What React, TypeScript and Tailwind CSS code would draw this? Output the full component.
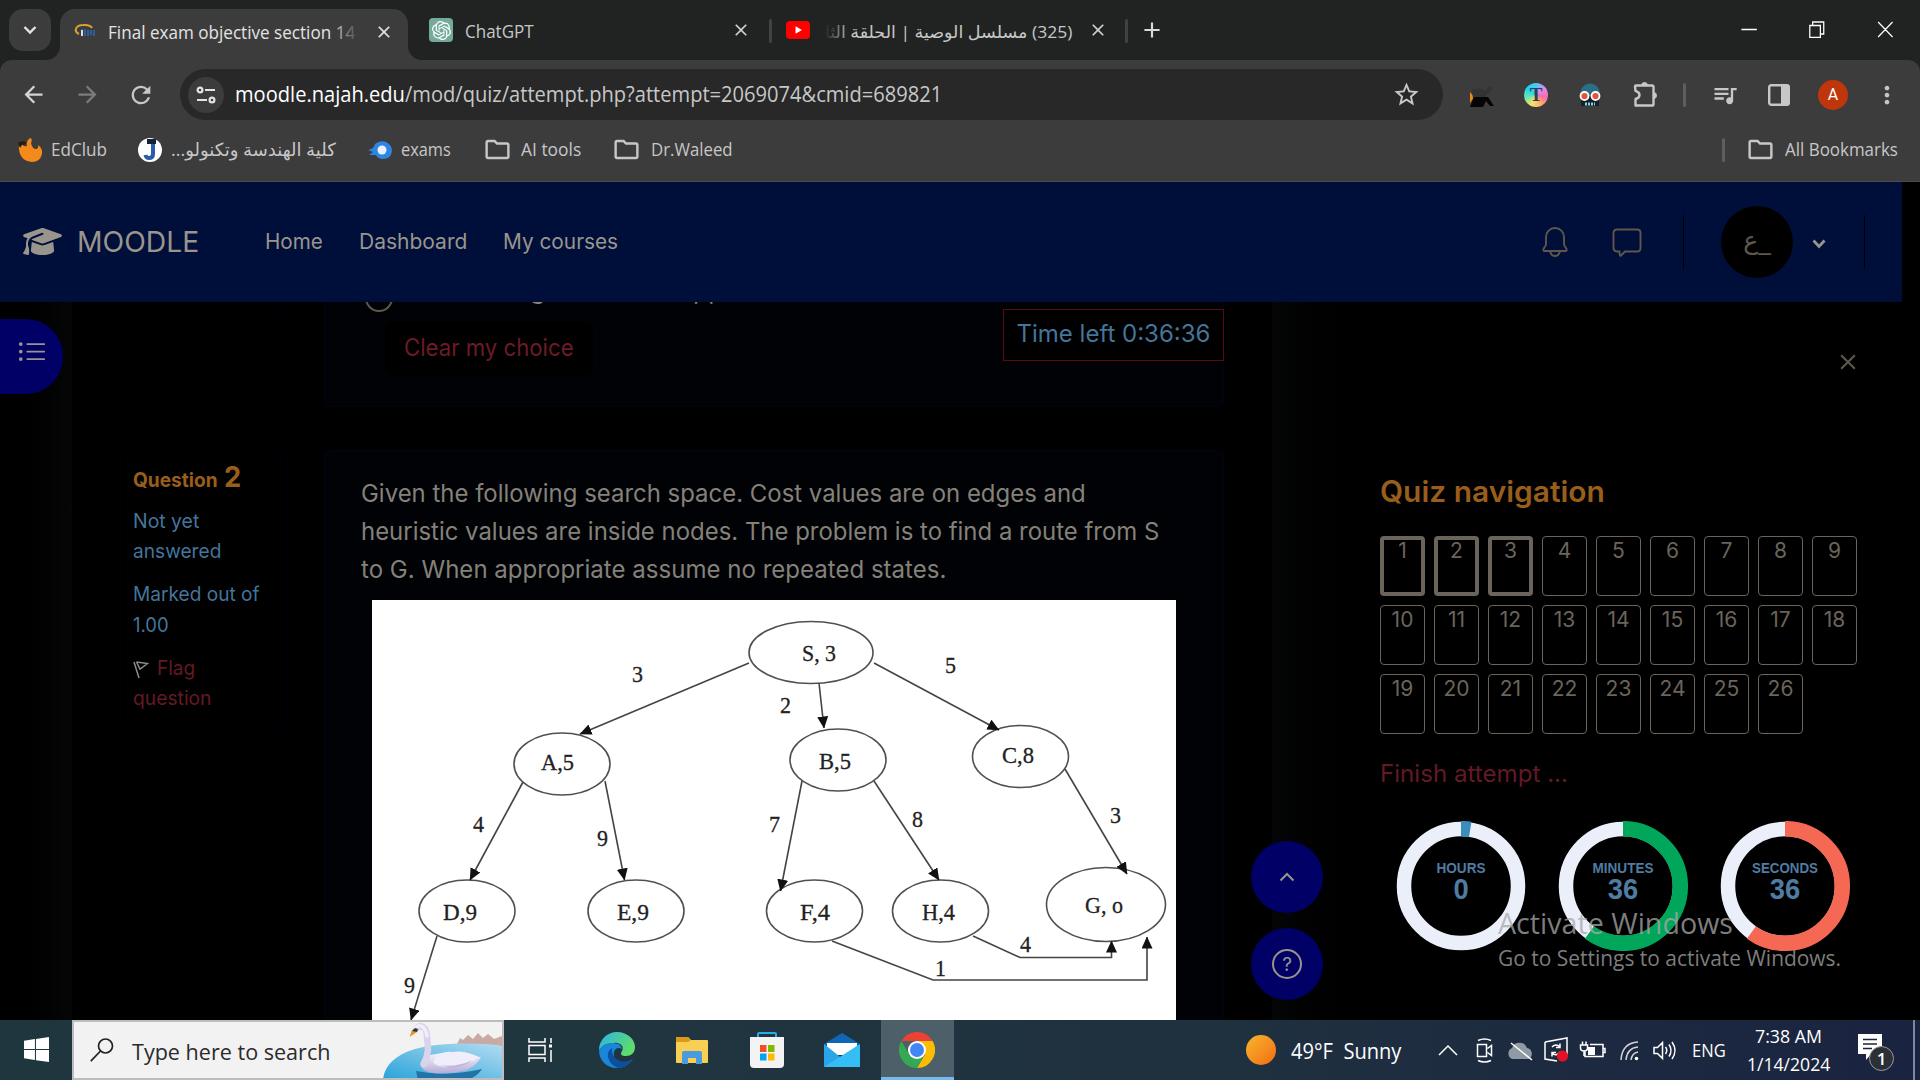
import React, { useLayoutEffect, useRef, useState } from "react";
import {
  MdAdd,
  MdArrowBack,
  MdArrowForward,
  MdClose,
  MdMoreVert,
  MdOutlineExtension,
  MdOutlineFolder,
  MdQueueMusic,
  MdRefresh,
  MdStarBorder,
} from "react-icons/md";
import { FaGraduationCap } from "react-icons/fa6";
import { SiOpenai } from "react-icons/si";
import { BsListUl } from "react-icons/bs";

const UI = "font-['Open_Sans','DejaVu_Sans',sans-serif]";

/** Single line of text condensed or stretched to a fixed width. */
function Fit({
  w,
  className = "",
  children,
  rtl = false,
}: {
  w: number;
  className?: string;
  children: React.ReactNode;
  rtl?: boolean;
}) {
  const ref = useRef<HTMLSpanElement>(null);
  const [scale, setScale] = useState(1);
  useLayoutEffect(() => {
    if (ref.current) setScale(w / ref.current.offsetWidth);
  }, [w]);
  return (
    <span className={`block shrink-0 whitespace-nowrap ${className}`} style={{ width: w }} dir="ltr">
      <span
        ref={ref}
        dir={rtl ? "rtl" : "ltr"}
        className="inline-block origin-left"
        style={{ transform: `scaleX(${scale})` }}
      >
        {children}
      </span>
    </span>
  );
}

/* ---------- Browser chrome ---------- */

function MoodleFavicon() {
  return (
    <svg viewBox="0 0 22 18" className="h-[18px] w-[22px]">
      <path d="M5 11C-1 8 2 2 9 2c5-.5 8 1 9 3" fill="none" stroke="#d9a02c" strokeWidth="2" />
      <path d="M8 12V6M11 6v7M14 7v6M17 7v5M20 7v6" stroke="#2f62a8" strokeWidth="1.8" />
      <path d="M8 7v6" stroke="#fff" strokeWidth="1.6" />
    </svg>
  );
}

function TabStrip() {
  return (
    <div className="flex h-[60px] items-start bg-[#202322]">
      <div className="mt-[9px] ml-[9px] flex h-[42px] w-[42px] items-center justify-center rounded-[14px] bg-[#3c3c3c]">
        <svg viewBox="0 0 14 10" className="h-[10px] w-[14px]">
          <path d="M1.5 2 7 7.5 12.500 2" fill="none" stroke="#e3e3e3" strokeWidth="2.4" />
        </svg>
      </div>
      <div className="relative mt-[9px] ml-[9px] flex h-[51px] w-[348px] items-center rounded-t-[15px] bg-[#3c3c3c] pb-[6px] pl-[14px]">
        <svg viewBox="0 0 14 14" className="absolute bottom-0 -left-[14px] h-[14px] w-[14px]">
          <path d="M14 0v14H0A14 14 0 0 0 14 0" fill="#3c3c3c" />
        </svg>
        <svg viewBox="0 0 14 14" className="absolute -right-[14px] bottom-0 h-[14px] w-[14px]">
          <path d="M0 0v14h14A14 14 0 0 1 0 0" fill="#3c3c3c" />
        </svg>
        <MoodleFavicon />
        <div className="relative ml-[12px] w-[252px] text-[18px] leading-[26px] text-[#e3e3e3]">
          <Fit w={247}>Final exam objective section 14</Fit>
          <div className="absolute inset-y-0 right-0 w-[30px] bg-gradient-to-r from-[#3c3c3c]/0 to-[#3c3c3c]" />
        </div>
        <MdClose className="ml-[14px] h-[20px] w-[20px] text-[#e3e3e3]" />
      </div>
      <div className="flex h-[60px] w-[361px] items-center pl-[21px]">
        <div className="flex h-[24px] w-[24px] items-center justify-center rounded-[4px] bg-[#74aa9c]">
          <SiOpenai className="h-[19px] w-[19px] text-white" />
        </div>
        <Fit w={69} className="mt-[2px] ml-[12px] text-[18px] leading-[26px] text-[#c7c7c7]">
          ChatGPT
        </Fit>
        <MdClose className="ml-[197px] h-[20px] w-[20px] text-[#d0d0d0]" />
      </div>
      <div className="mt-[19px] h-[24px] w-[3px] rounded bg-[#3f4241]" />
      <div className="flex h-[60px] w-[353px] items-center pl-[14px]">
        <svg viewBox="0 0 24 18" className="h-[18px] w-[24px]">
          <rect width="24" height="18" rx="4" fill="#f00" />
          <path d="M9.500 5.200v7.600L16 9z" fill="#fff" />
        </svg>
        <div className="relative mt-[3px] ml-[15px] w-[247px] text-[17px] leading-[28px] text-[#c7c7c7]">
          <Fit w={247} rtl>
            (325) مسلسل الوصية | الحلقة الثا
          </Fit>
          <div className="absolute inset-y-0 left-0 w-[26px] bg-gradient-to-l from-[#202322]/0 to-[#202322]" />
        </div>
        <MdClose className="ml-[16px] h-[20px] w-[20px] text-[#d0d0d0]" />
      </div>
      <div className="mt-[19px] h-[24px] w-[3px] rounded bg-[#3f4241]" />
      <MdAdd className="mt-[17px] ml-[11px] h-[26px] w-[26px] text-[#d8d8d8]" />
      <svg viewBox="0 0 160 18" className="mt-[20px] mr-[26px] ml-auto h-[18px] w-[154px]" preserveAspectRatio="none">
        <path
          d="M1.500 9.500h16M72.500 5.500h11v12h-11zM75.500 5.500v-3.500h11.500v12h-3.500M143.500 2l15 15M158.500 2l-15 15"
          fill="none"
          stroke="#fff"
          strokeWidth="1.300"
        />
      </svg>
    </div>
  );
}

function Slot({ children, className = "w-[54px]" }: { children: React.ReactNode; className?: string }) {
  return <div className={`flex shrink-0 items-center justify-center ${className}`}>{children}</div>;
}

function Toolbar() {
  return (
    <div className="bg-[#202322]">
      <div className="flex h-[69px] items-center rounded-t-[12px] bg-[#3c3c3c] px-[6px]">
        <Slot>
          <MdArrowBack className="h-[27px] w-[27px] text-[#d4d4d4]" />
        </Slot>
        <Slot>
          <MdArrowForward className="h-[27px] w-[27px] text-[#7c7c7c]" />
        </Slot>
        <Slot>
          <MdRefresh className="h-[28px] w-[28px] text-[#c7c7c7]" />
        </Slot>
        <div className="ml-[12px] flex h-[51px] w-[1263px] items-center rounded-full bg-[#282828] pl-[8px]">
          <div className="flex h-[36px] w-[36px] items-center justify-center rounded-full bg-[#3c3c3c]">
            <svg viewBox="0 0 20 18" className="h-[18px] w-[20px]" fill="none" stroke="#e3e3e3" strokeWidth="2.200">
              <circle cx="4" cy="4" r="2.400" />
              <path d="M9 4h10M1 14h10" />
              <circle cx="16" cy="14" r="2.400" />
            </svg>
          </div>
          <Fit w={707} className="-mt-px ml-[11px] text-[21px] leading-[30px] text-[#c7c7c7]">
            <span className="text-white">moodle.najah.edu</span>/mod/quiz/attempt.php?attempt=2069074&amp;cmid=689821
          </Fit>
          <MdStarBorder className="mr-[22px] ml-auto h-[29px] w-[29px] text-[#c7c7c7]" />
        </div>
        <div className="ml-auto flex">
          <Slot>
            <svg viewBox="0 0 26 26" className="h-[26px] w-[26px]">
              <path d="M1 10l4 5-4 6z" fill="#f08a12" />
              <path d="M3 8q7-3 13 1l5-5q3 2 1 5l-5 4v4H4z" fill="#333" />
              <path d="M5 15h14l6 9h-4l-4-5-3 6H1z" fill="#050505" />
            </svg>
          </Slot>
          <Slot>
            <div className="flex h-[24px] w-[24px] items-center justify-center rounded-full bg-[conic-gradient(#4cc8f5,#d98cf0,#fb6aa8,#ffb066,#f6e36a,#62e6b5,#1fd3f0,#4cc8f5)] font-['Liberation_Serif',serif] text-[19px] leading-none font-bold text-[#333b55]">
              T
            </div>
          </Slot>
          <Slot>
            <svg viewBox="0 0 24 24" className="h-[24px] w-[24px]">
              <path d="M2 14C1-4 23-4 22 14z" fill="#2b6f86" />
              <path d="M3 13h18v10H3z" fill="#16202a" />
              <path d="M7 21h10" stroke="#8cd0e0" strokeWidth="3" strokeDasharray="2 1" />
              <circle cx="6.500" cy="13" r="4" fill="#e2553a" stroke="#fff" strokeWidth="1.800" />
              <circle cx="17.500" cy="13" r="4" fill="#e2553a" stroke="#fff" strokeWidth="1.800" />
            </svg>
          </Slot>
          <Slot>
            <MdOutlineExtension className="-mt-[2px] ml-[2px] h-[28px] w-[28px] text-[#c7c7c7] hidden" />
            <svg viewBox="0 0 26 26" className="-mt-[2px] ml-[2px] h-[26px] w-[26px]" fill="none" stroke="#c7c7c7" strokeWidth="2.400">
              <path d="M3 5.500q0-1 1-1h16q1.500 0 1.500 1.500v17.500q0 1-1 1H3.500V18q4-1 4-4t-4-4.200z" strokeLinejoin="round" />
              <path d="M9.500 4.500a3 3 0 0 1 6 0zM21.500 11.500a3 3 0 0 1 0 6z" fill="#c7c7c7" strokeWidth="1" />
            </svg>
          </Slot>
          <Slot className="w-[27px]">
            <div className="h-[24px] w-[3px] rounded bg-[#5e5e5e]" />
          </Slot>
          <Slot>
            <MdQueueMusic className="h-[28px] w-[28px] text-[#c7c7c7]" />
          </Slot>
          <Slot>
            <svg viewBox="0 0 22 22" className="h-[22px] w-[22px]">
              <rect x="1.200" y="1.200" width="19.600" height="19.600" rx="2" fill="none" stroke="#c7c7c7" strokeWidth="2.400" />
              <path d="M13 1h7v20h-7z" fill="#c7c7c7" />
            </svg>
          </Slot>
          <Slot>
            <div className="flex h-[30px] w-[30px] items-center justify-center rounded-full bg-[#bf360c] font-['Roboto',sans-serif] text-[16px] text-white">
              A
            </div>
          </Slot>
          <Slot>
            <MdMoreVert className="h-[28px] w-[28px] text-[#c7c7c7]" />
          </Slot>
        </div>
      </div>
    </div>
  );
}

function Bookmark({ w, className, children, rtl }: { w: number; className: string; children: React.ReactNode; rtl?: boolean }) {
  return (
    <Fit w={w} rtl={rtl} className={`-mt-px text-[18px] leading-[26px] text-[#c7c7c7] ${className}`}>
      {children}
    </Fit>
  );
}

function BookmarksBar() {
  return (
    <div className="flex h-[53px] items-center border-b border-[#4a4a4a] bg-[#3c3c3c] pb-[11px] pl-[18px]">
      <svg viewBox="0 0 24 24" className="h-[24px] w-[24px]">
        <path d="M1 11Q0 6 4 5q1 4 5 3-1-5 3-8 3 1 1 5 1 5 4 6 4 0 3-4 5 3 4 9-2 8-10 8Q2 23 1 11" fill="#f58a1c" />
        <path d="M0 5q4-3 8-1 0 3-4 3l-2 3z" fill="#2b1b10" />
      </svg>
      <Bookmark w={56} className="ml-[9px]">EdClub</Bookmark>
      <div className="ml-[31px] flex h-[24px] w-[24px] items-center justify-center rounded-full bg-white">
        <svg viewBox="0 0 24 24" className="h-[24px] w-[24px]">
          <path d="M15 5v11q0 4-4 4-3 0-3.500-3" fill="none" stroke="#2a5ca8" strokeWidth="4" />
          <path d="M9 1h9v5H9z" fill="#14213a" />
        </svg>
      </div>
      <Bookmark w={165} rtl className="ml-[9px]">كلية الهندسة وتكنولو...</Bookmark>
      <svg viewBox="0 0 24 18" className="ml-[32px] h-[18px] w-[24px]">
        <path d="M0 9q6-1 7-6Q12-1 18 1q6 3 6 9-1 8-9 8-5 0-7-4H1l4-3z" fill="#2f86e0" />
        <circle cx="14" cy="9" r="4.500" fill="#e8f3ff" />
      </svg>
      <Bookmark w={50} className="ml-[9px]">exams</Bookmark>
      <MdOutlineFolder className="ml-[32px] h-[29px] w-[29px] text-[#c7c7c7]" />
      <Bookmark w={60} className="ml-[9px]">AI tools</Bookmark>
      <MdOutlineFolder className="ml-[31px] h-[29px] w-[29px] text-[#c7c7c7]" />
      <Bookmark w={82} className="ml-[10px]">Dr.Waleed</Bookmark>
      <div className="ml-auto h-[24px] w-[3px] rounded bg-[#5e5e5e]" />
      <MdOutlineFolder className="ml-[21px] h-[29px] w-[29px] text-[#c7c7c7]" />
      <Bookmark w={113} className="mr-[22px] ml-[10px]">All Bookmarks</Bookmark>
    </div>
  );
}

/* ---------- Moodle page ---------- */

function MoodleHeader() {
  return (
    <header className="flex h-[120px] w-[1902px] items-center bg-[#000e3a] text-[#9a958c]">
      <FaGraduationCap className="-mt-[2px] ml-[23px] h-[31px] w-[39px]" />
      <Fit w={122} className="ml-[15px] text-[29px] leading-[40px]">MOODLE</Fit>
      <Fit w={58} className="ml-[66px] text-[21px] leading-[30px]">Home</Fit>
      <Fit w={108} className="ml-[36px] text-[21px] leading-[30px]">Dashboard</Fit>
      <Fit w={115} className="ml-[36px] text-[21px] leading-[30px]">My courses</Fit>
      <div className="ml-auto flex items-center text-[#5f574c]">
        <svg viewBox="0 0 28 32" className="h-[32px] w-[28px]" fill="none" stroke="currentColor" strokeWidth="1.900">
          <path d="M5 11a9 9 0 0 1 18 0v7q0 2 2 4 1.500 3-.5 3h-21q-2 0-.5-3 2-2 2-4z" />
          <path d="M9 25q1 5 5 5t5-5" />
        </svg>
        <svg viewBox="0 0 30 30" className="mt-[2px] ml-[43px] h-[30px] w-[30px]" fill="none" stroke="currentColor" strokeWidth="1.900">
          <path d="M5 1.500h20q3.500 0 3.500 3.500v15q0 3.500-3.500 3.500H13l-4.500 4.500q-1 0-1-4.500H5Q1.500 23 1.500 20V5Q1.500 1.500 5 1.500z" />
        </svg>
        <div className="ml-[41px] h-[54px] w-px bg-black" />
        <div className="ml-[37px] flex h-[72px] w-[72px] items-center justify-center rounded-full bg-black pb-[2px] font-['DejaVu_Sans',sans-serif] text-[25px] text-[#5f574c]">
          ع_
        </div>
        <svg viewBox="0 0 14 10" className="mt-[4px] ml-[19px] h-[10px] w-[14px]">
          <path d="M1.500 1.500 7 7.500 12.500 1.500" fill="none" stroke="#9a958c" strokeWidth="2.800" />
        </svg>
        <div className="mr-[37px] ml-[38px] h-[54px] w-px bg-black" />
      </div>
    </header>
  );
}

type Node = { x: number; y: number; rx: number; ry: number; label: string; tx: number; ty: number; w: number };

const nodes: Node[] = [
  { x: 811, y: 652.5, rx: 62, ry: 31, label: "S, 3", tx: 802, ty: 661, w: 34 },
  { x: 562, y: 764, rx: 48, ry: 31, label: "A,5", tx: 541, ty: 770, w: 33 },
  { x: 838, y: 760, rx: 48, ry: 31, label: "B,5", tx: 819, ty: 769, w: 32 },
  { x: 1020.5, y: 756.5, rx: 48, ry: 31, label: "C,8", tx: 1002, ty: 763, w: 32 },
  { x: 467, y: 911, rx: 48, ry: 31, label: "D,9", tx: 443, ty: 920, w: 34 },
  { x: 636, y: 911, rx: 48, ry: 31, label: "E,9", tx: 617, ty: 920, w: 32 },
  { x: 814.500, y: 911, rx: 48, ry: 31, label: "F,4", tx: 800, ty: 920, w: 30 },
  { x: 940.500, y: 911, rx: 48, ry: 31, label: "H,4", tx: 922, ty: 920, w: 33 },
  { x: 1106, y: 904.5, rx: 59.5, ry: 37, label: "G, o", tx: 1085, ty: 913, w: 38 },
];

const edges = [
  "749,663 580,734",
  "819,683 824,728",
  "874,663 999,730",
  "523,782 470,880",
  "605,781 624.5,880",
  "802,781 780.5,891",
  "874,781 939,880",
  "1065,769 1127,874",
  "437,936 411,1020",
  "973,936 1020,957.500 1111.500,957.500 1111.500,941",
  "832,941 933,980 1147,980 1147,937",
];

const costs: [string, number, number][] = [
  ["3", 632, 682],
  ["2", 780, 713],
  ["5", 945, 673],
  ["4", 473, 832],
  ["9", 597, 846],
  ["7", 769, 832],
  ["8", 912, 827],
  ["3", 1110, 823],
  ["9", 404, 993],
  ["4", 1020, 952],
  ["1", 935, 976],
];

function SearchTree() {
  return (
    <svg viewBox="372 600 804 420" className="ml-[11px] block h-[420px] w-[804px] bg-white">
      <defs>
        <marker id="head" viewBox="0 0 12 11" refX="11.500" refY="5.500" markerWidth="12" markerHeight="11" markerUnits="userSpaceOnUse" orient="auto">
          <path d="M0 0 12 5.500 0 11z" fill="#111" />
        </marker>
      </defs>
      {nodes.map((n) => (
        <ellipse key={n.label} cx={n.x} cy={n.y} rx={n.rx} ry={n.ry} fill="none" stroke="#505050" strokeWidth="1.600" />
      ))}
      {edges.map((p) => (
        <polyline key={p} points={p} fill="none" stroke="#444" strokeWidth="1.600" markerEnd="url(#head)" />
      ))}
      <g fill="#222" stroke="#222" strokeWidth=".3" fontFamily="Liberation Serif, serif" fontSize="24">
        {nodes.map((n) => (
          <text key={n.label} x={n.tx} y={n.ty} textLength={n.w} lengthAdjust="spacingAndGlyphs">
            {n.label}
          </text>
        ))}
        {costs.map(([t, x, y]) => (
          <text key={`${x}-${y}`} x={x} y={y} textLength="11" lengthAdjust="spacingAndGlyphs">
            {t}
          </text>
        ))}
      </g>
    </svg>
  );
}

function QuestionInfo() {
  return (
    <div className="h-[276px] w-[168px] border border-[#00000f] pt-[7px] pl-[12px] text-[20px] leading-[30px] text-[#44759b]">
      <div className="flex h-[37px] items-baseline gap-[6px] font-bold text-[#9a5e1c]">
        <Fit w={85} className="text-[20px] leading-[37px]">Question</Fit>
        <Fit w={17} className="text-[29px] leading-[37px]">2</Fit>
      </div>
      <Fit w={66} className="mt-[11px]">Not yet</Fit>
      <Fit w={88} className="h-[31px]">answered</Fit>
      <Fit w={127} className="mt-[12px]">Marked out of</Fit>
      <Fit w={36} className="mt-px">1.00</Fit>
      <div className="mt-[13px] flex items-center text-[#621a24]">
        <svg viewBox="0 0 16 18" className="mt-[4px] h-[18px] w-[16px]" fill="none" stroke="#8b8b8b" strokeWidth="1.500">
          <path d="M1 1l5 16M3.500 1l11 1.500L7 8 3.500 1" />
        </svg>
        <Fit w={38} className="ml-[8px]">Flag</Fit>
      </div>
      <Fit w={78} className="text-[#621a24]">question</Fit>
    </div>
  );
}

function QuizColumn() {
  return (
    <div className="h-[718px] w-[1200px] overflow-hidden bg-black pl-[48px]">
      <div className="flex h-[148px]">
        <div className="h-[10px] w-[168px] border border-t-0 border-[#00000f]" />
        <div className="relative ml-[36px] h-[105px] w-[900px] rounded-b-[6px] border border-t-0 border-[#00041a] bg-[#000206]">
          <div className="flex h-[20px] overflow-hidden">
            <div className="-mt-[18px] ml-[40px] h-[28px] w-[28px] rounded-full border-2 border-[#5f574c]" />
            <div className="-mt-[27px] ml-[137px] flex text-[25px] leading-[30px] text-[#8a857c]">
              <span className="w-[163px]">g</span>
              <span>pp</span>
            </div>
          </div>
          <div className="ml-[60px] flex h-[53px] w-[208px] items-center justify-center rounded-[6px] bg-black pb-[2px]">
            <Fit w={170} className="text-[24px] leading-[36px] text-[#6c1b26]">Clear my choice</Fit>
          </div>
          <div className="absolute top-[7px] -right-px flex h-[52px] w-[221px] items-center justify-center border border-[#5a0a14] bg-black pb-[2px]">
            <Fit w={194} className="text-[24px] leading-[36px] text-[#44759b]">Time left 0:36:36</Fit>
          </div>
        </div>
      </div>
      <div className="flex">
        <QuestionInfo />
        <div className="ml-[36px] h-[580px] w-[900px] rounded-t-[6px] border border-[#00041a] bg-[#000206] pt-[23px] pl-[36px] text-[24.500px] leading-[38px] text-[#858179]">
          <Fit w={725}>Given the following search space. Cost values are on edges and</Fit>
          <Fit w={798}>heuristic values are inside nodes. The problem is to find a route from S</Fit>
          <Fit w={585}>to G. When appropriate assume no repeated states.</Fit>
          <div className="mt-[12px]">
            <SearchTree />
          </div>
        </div>
      </div>
    </div>
  );
}

function Timer({ label, value, fraction, color, w }: { label: string; value: string; fraction: number; color: string; w: number }) {
  const c = 2 * Math.PI * 57;
  return (
    <svg viewBox="-81 -65 162 130" className="h-[130px] w-[162px]">
      <circle r="57" fill="none" stroke="#ebeff9" strokeWidth="14.500" />
      <circle
        r="57.300"
        fill="none"
        stroke={color}
        strokeWidth="15.500"
        strokeDasharray={`${c * fraction} ${c}`}
        transform="rotate(-90)"
      />
      <g fill="#4f7ca3" fontFamily="Liberation Sans, sans-serif" fontWeight="700" textAnchor="middle">
        <text y="-13" fontSize="15" textLength={w} lengthAdjust="spacingAndGlyphs">{label}</text>
        <text y="12.500" fontSize="29" textLength={value.length * 15.200} lengthAdjust="spacingAndGlyphs">{value}</text>
      </g>
    </svg>
  );
}

function NavigationDrawer() {
  return (
    <aside className="relative h-[718px] flex-1 bg-gradient-to-r from-[#050607] to-black to-[110px] pl-[108px]">
      <MdClose className="mt-[47px] ml-[455px] h-[26px] w-[26px] text-[#5f574c]" />
      <Fit w={225} className="mt-[96px] text-[29.500px] leading-[40px] font-semibold text-[#9a5e1c]">Quiz navigation</Fit>
      <div className="mt-[25px] flex w-[490px] flex-wrap gap-[9px]">
        {Array.from({ length: 26 }, (_, i) => (
          <div
            key={i}
            className={`flex h-[60px] w-[45px] justify-center rounded-[4px] border-[#6b645a] text-[21px] leading-[30px] text-[#6b645a] ${
              i < 3 ? "border-4" : "border"
            }`}
          >
            <span className={i < 3 ? "-mt-[4px]" : "-mt-px"}>{i + 1}</span>
          </div>
        ))}
      </div>
      <Fit w={188} className="mt-[22px] text-[24px] leading-[36px] text-[#621a24]">Finish attempt ...</Fit>
      <div className="mt-[29px] flex">
        <Timer label="HOURS" value="0" fraction={0.026} color="#3c8dbc" w={49} />
        <Timer label="MINUTES" value="36" fraction={0.602} color="#00a65a" w={61} />
        <Timer label="SECONDS" value="36" fraction={0.602} color="#f56954" w={66} />
      </div>
      <div className={`absolute top-[603px] left-[226px] text-[#a8a8a8]/75 ${UI}`}>
        <Fit w={235} className="text-[29px] leading-[36px]">Activate Windows</Fit>
        <Fit w={343} className="mt-[2px] text-[21px] leading-[30px]">Go to Settings to activate Windows.</Fit>
      </div>
    </aside>
  );
}

function MoodlePage() {
  return (
    <div className="relative h-[838px] overflow-hidden bg-black font-['Inter',sans-serif]">
      <MoodleHeader />
      <div className="flex">
        <div className="h-[718px] w-[72px] bg-gradient-to-r from-black to-[#050706]">
          <div className="mt-[17px] flex h-[75px] w-[63px] items-center rounded-r-[37px] bg-[#000066] pb-[8px] pl-[17px]">
            <BsListUl className="h-[31px] w-[30px] text-[#9a958c]" />
          </div>
        </div>
        <QuizColumn />
        <NavigationDrawer />
      </div>
      <div className="absolute top-[659px] left-[1251px] flex flex-col gap-[15px]">
        <div className="flex h-[72px] w-[72px] items-center justify-center rounded-full bg-[#000066]">
          <svg viewBox="0 0 16 10" className="h-[10px] w-[16px]">
            <path d="M1.500 8.500 8 2l6.500 6.500" fill="none" stroke="#9a958c" strokeWidth="2" />
          </svg>
        </div>
        <div className="flex h-[72px] w-[72px] items-center justify-center rounded-full bg-[#000066]">
          <div className="flex h-[30px] w-[30px] items-center justify-center rounded-full border-2 border-[#9a958c] text-[19px] leading-none text-[#9a958c]">
            ?
          </div>
        </div>
      </div>
    </div>
  );
}

/* ---------- Windows taskbar ---------- */

function Swan() {
  return (
    <svg viewBox="384 1022 119 56" className="ml-auto h-[56px] w-[119px]">
      <defs>
        <linearGradient id="lake" x1="0" y1="1" x2="1" y2="0">
          <stop offset="0" stopColor="#27a3d8" />
          <stop offset="1" stopColor="#b3dcf2" />
        </linearGradient>
        <linearGradient id="feather" x1="0" y1="0" x2="0" y2="1">
          <stop offset="0" stopColor="#fbfaff" />
          <stop offset="1" stopColor="#b4aad6" />
        </linearGradient>
      </defs>
      <path d="M458 1044l3-6 3 2 5-5 5 4 5-6 5 5 5-4 6 5 8-3v10z" fill="#c9a9a4" />
      <path d="M384 1080c1-14 12-25 32-31 22-6 62-7 87-3v34z" fill="url(#lake)" />
      <path d="M417 1071q30 6 66-2-6 9-16 11h-48z" fill="#2273a8" />
      <path d="M421 1064q2-8 10-9l12-2q18-2 22-1 8 5 17 5-4 8-14 13-18 5-34 3-12-2-13-9" fill="url(#feather)" />
      <path d="M417 1029q3-4 7-2 4 3 4 10 1 8 1 13-1 8-4 14" fill="none" stroke="#d9d3ec" strokeWidth="6.500" strokeLinecap="round" />
      <path d="M416 1028q4-4 8-1 3 3 4 9" fill="none" stroke="#f1eefa" strokeWidth="3.500" strokeLinecap="round" />
      <path d="M434 1062q6-12 20-10 14-1 26 5-12 10-28 10-14 1-18-5" fill="#f1eefb" />
      <path d="M440 1065q16 3 34-5-10 8-22 8z" fill="#c2b8de" />
      <path d="M410.500 1037l2.500-7 5 2z" fill="#e9912e" />
      <path d="M413 1031l3-3 3 1-1 3z" fill="#333" />
    </svg>
  );
}

function EdgeLogo() {
  return (
    <svg viewBox="0 0 36 36" className="h-[36px] w-[36px]">
      <defs>
        <linearGradient id="edgeTop" x1="0" y1="0" x2="1" y2=".5">
          <stop offset="0" stopColor="#2bb3e8" />
          <stop offset="1" stopColor="#5fdc6c" />
        </linearGradient>
      </defs>
      <path d="M0 18C0 8 8 0 18 0s18 7 18 15c0 6-4 9-9 9s-6-2-4-5c3-5-3-9-8-8Q5 11 0 18" fill="url(#edgeTop)" />
      <path d="M0 18Q5 10 14 11q8 0 9 6-6-3-8 3-2 8 8 10 6 1 11-3-6 9-16 9C7 36 0 28 0 18" fill="#1a86d9" />
      <path d="M13 16q-5 3-4 9 2 8 10 11 9 0 15-9-7 4-13 2-9-3-8-13" fill="#0c4f9e" />
    </svg>
  );
}

function ChromeLogo() {
  return (
    <svg viewBox="-18 -18 36 36" className="h-[36px] w-[36px]">
      <path d="M-15.600-9A18 18 0 0 1 15.600-9H0z" fill="#ea4335" />
      <path d="M15.600-9A18 18 0 0 1 0 18L7.800 4.500 0-9z" fill="#fbbc04" />
      <path d="M0 18A18 18 0 0 1-15.600-9L-7.800 4.500 7.800 4.500z" fill="#34a853" />
      <circle r="9" fill="#fff" />
      <circle r="7" fill="#4285f4" />
    </svg>
  );
}

function Tray() {
  const s = { fill: "none", stroke: "#fff", strokeWidth: 1.5 };
  return (
    <svg viewBox="1436 1034 244 32" className="ml-[35px] h-[32px] w-[244px]">
      <path d="M1439 1055l9-9 9 9" {...s} />
      <path d="M1477.500 1044.500h9v12h-9zM1487.500 1048.500l4-3v10l-4-3M1478 1040.500q6.500-3 13 0M1478 1060.500q6.500 3 13 0" {...s} />
      <path d="M1512 1059a6 6 0 0 1 0-11 8 8 0 0 1 15 0 6 6 0 0 1 2 11z" fill="#8f9aa5" />
      <path d="M1511 1043l21 17" {...s} />
      <path d="M1545 1042l22-4v18M1545 1042v17l12 2M1552 1047q4-4 8 0m0-3.500v4h-4M1560 1052q-4 5-8 1m0 3.500v-4h4" {...s} />
      <circle cx="1562.500" cy="1056" r="5.600" fill="#e81123" />
      <path d="M1590 1044.500h13v12h-18v-5M1603.500 1048.500h1.500v4h-1.500M1580.500 1045h7v3q0 3-3.500 3t-3.500-3zM1582.500 1045v-3.500M1586 1045v-3.500M1584 1051v5" {...s} />
      <path d="M1588 1047h7v8h-7z" fill="#fff" />
      <path d="M1621 1060Q1622 1043 1638 1042M1626 1060Q1627 1048 1638 1047M1631 1060Q1632 1053 1638 1052" {...s} opacity=".8" />
      <circle cx="1636.500" cy="1058.500" r="1.800" fill="#fff" />
      <path d="M1654 1047.500h3.500l5-5v16l-5-5h-3.500zM1665.500 1047q2.500 3 0 7M1669 1044.500q4 6 0 12M1672 1042q6 8.500 0 17" {...s} />
    </svg>
  );
}

function Taskbar() {
  return (
    <div className={`flex h-[60px] items-center bg-gradient-to-r from-[#20363f] from-30% via-[#1f303f] via-65% to-[#1a2340] text-white ${UI}`}>
      <div className="flex w-[72px] justify-center">
        <svg viewBox="0 0 24 24" className="-mt-px h-[25px] w-[25px]" fill="#fff">
          <path d="M0 3.500 10.500 2v9.500H0zM11.500 1.800 24 0v11.500H11.500zM0 12.500h10.500V22L0 20.500zM11.500 12.500H24V24l-12.500-1.800z" />
        </svg>
      </div>
      <div className="flex h-[60px] w-[432px] items-center border-2 border-[#bdbdbd] bg-[#f2f2f2] pl-[16px]">
        <svg viewBox="0 0 24 24" className="h-[24px] w-[24px]" fill="none" stroke="#222" strokeWidth="1.700">
          <circle cx="15.500" cy="8" r="7" />
          <path d="M10.500 13 .8 23.200" />
        </svg>
        <Fit w={198} className="mt-px ml-[18px] text-[22px] leading-[30px] text-[#2b2b2b]">Type here to search</Fit>
        <Swan />
      </div>
      <Slot className="w-[75px] pr-[4px]">
        <svg viewBox="0 0 24 24" className="h-[24px] w-[24px]" fill="none" stroke="#fff" strokeWidth="1.500">
          <path d="M1 0v4h16V0M1 24v-4h16v4M1 7.500h16v9H1zM23 0v5M23 12v12" />
          <path d="M21 8h3" strokeWidth="3" />
        </svg>
      </Slot>
      <Slot className="w-[75px]">
        <EdgeLogo />
      </Slot>
      <Slot className="w-[75px]">
        <svg viewBox="0 0 32 27" className="h-[27px] w-[32px]">
          <path d="M0 1q0-1 1-1h11l3 3H31q1 0 1 1v21q0 1-1 1H1q-1 0-1-1z" fill="#f8cf52" />
          <path d="M0 1q0-1 1-1h11l3 3-3 2H0z" fill="#d99a1b" />
          <path d="M6 27V16q0-2 2-2h16q2 0 2 2v11h-6v-6h-8v6z" fill="#4a9ae0" />
        </svg>
      </Slot>
      <Slot className="w-[75px]">
        <svg viewBox="0 0 36 36" className="h-[36px] w-[36px]">
          <path d="M9 6V2q0-1 1-1h16q1 0 1 1v4" fill="none" stroke="#29abe8" strokeWidth="2" />
          <path d="M1 5h34v27q0 4-4 4H5q-4 0-4-4z" fill="#f3f3f3" />
          <path d="M11 13h6.500v7H11z" fill="#f25022" />
          <path d="M19 13h6.500v7H19z" fill="#7fba00" />
          <path d="M11 21.500h6.500v7H11z" fill="#00a4ef" />
          <path d="M19 21.500h6.500v7H19z" fill="#ffb900" />
        </svg>
      </Slot>
      <Slot className="w-[75px]">
        <svg viewBox="0 0 36 34" className="h-[34px] w-[36px]">
          <path d="M0 11 18 0l18 11v10H0z" fill="#1065b5" />
          <path d="M3 10h30v12H3z" fill="#fff" />
          <path d="M0 11l20 16-20 7z" fill="#2aa5ea" />
          <path d="M36 11v23H0z" fill="#35bdf5" />
        </svg>
      </Slot>
      <div className="ml-[2px] flex h-[60px] w-[73px] items-center justify-center border-b-[3px] border-[#76b9ed] bg-[#4d5f68] pt-[3px] pr-[2px]">
        <ChromeLogo />
      </div>
      <div className="ml-[292px] h-[30px] w-[30px] rounded-full bg-gradient-to-br from-[#f5b62c] to-[#f26a12]" />
      <Fit w={110} className="mt-px ml-[15px] text-[21px] leading-[30px] whitespace-pre">{"49°F  Sunny"}</Fit>
      <Tray />
      <Fit w={34} className="ml-[12px] text-[18px] leading-[26px]">ENG</Fit>
      <div className="ml-[20px] flex w-[84px] flex-col items-center text-[18px] leading-[28px]">
        <Fit w={67}>7:38 AM</Fit>
        <Fit w={83}>1/14/2024</Fit>
      </div>
      <div className="relative mt-[6px] ml-[28px] h-[38px] w-[38px]">
        <svg viewBox="0 0 24 26" className="h-[26px] w-[24px]">
          <path d="M0 0h24v20H13l-5 6v-6H0z" fill="#fff" />
          <path d="M5 5.500h14M5 10h14M5 14.500h9" stroke="#1a2340" strokeWidth="1.300" />
        </svg>
        <div className="absolute top-[12px] left-[11px] flex h-[25px] w-[25px] items-center justify-center rounded-full border border-[#9a9a9a] bg-[#2b2f36] text-[17px] font-semibold">
          1
        </div>
      </div>
      <div className="ml-auto h-[60px] w-[7px] border-l-2 border-[#808799]" />
    </div>
  );
}

export default function App() {
  return (
    <div className={`h-[1080px] w-[1920px] overflow-hidden bg-black ${UI}`}>
      <TabStrip />
      <Toolbar />
      <BookmarksBar />
      <MoodlePage />
      <Taskbar />
    </div>
  );
}
